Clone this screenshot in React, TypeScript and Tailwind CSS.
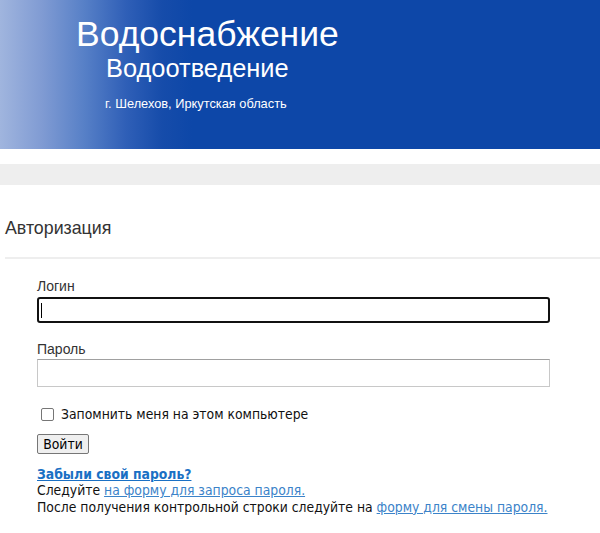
import React from "react";

export default function App() {
  return (
    <div className="w-[600px] min-h-[533px] bg-white font-['Liberation_Sans',Arial,sans-serif]">
      {/* Header banner */}
      <header className="h-[149px] bg-[linear-gradient(90deg,#a0b5de_0%,#809bd3_7%,#5780c7_14%,#2f5fb7_21%,#164caa_27%,#0d47a8_32%,#0d47a8_100%)] text-white">
        <div className="pl-[76px] pt-[14px]">
          <div className="text-[35.5px] leading-[40px]">Водоснабжение</div>
          <div className="pl-[30px] text-[25.4px] leading-[28px]">Водоотведение</div>
          <div className="pl-[29px] pt-[14px] text-[12.8px] leading-[16px]">г. Шелехов, Иркутская область</div>
        </div>
      </header>

      {/* Menu strip */}
      <div className="mt-[15px] h-[21px] bg-[#eeeeee]" />

      {/* Section heading */}
      <h1 className="pl-[5px] pt-[32px] text-[17.8px] leading-[22px] text-[#333]">Авторизация</h1>
      <div className="ml-[5px] mt-[18px] h-[2px] bg-[#eeeeee]" />

      {/* Login form */}
      <form className="pl-[37px] pt-[19px] w-[550px]">
        <label className="block text-[14px] leading-[16px] text-[#333] mb-[3px]">Логин</label>
        <div className="h-[26px] w-[513px] rounded-[3px] border-2 border-[#111] bg-white flex items-center pl-[2px]">
          <span className="w-px h-[15px] bg-black" />
        </div>

        <label className="block mt-[18px] text-[14px] leading-[16px] text-[#333] mb-[2px]">Пароль</label>
        <input
          type="password"
          className="block h-[28px] w-[513px] border border-[#c8c8c8] border-t-[#a0a0a0] bg-white outline-none"
        />

        <div className="mt-[19px] font-['DejaVu_Sans_Condensed','DejaVu_Sans',sans-serif] text-[13.8px] text-[#111]">
          <label className="flex items-center gap-[7px] pl-[4px]">
            <span className="w-[13px] h-[13px] rounded-[2px] border border-[#767676] bg-white" />
            <span className="leading-[16px]">Запомнить меня на этом компьютере</span>
          </label>

          <button
            type="button"
            className="mt-[12px] h-[20px] w-[52px] rounded-[2px] border border-[#767676] bg-[#efefef] text-[13.8px] leading-[16px] text-black"
          >
            Войти
          </button>

          <div className="mt-[11px] leading-[16.5px]">
            <a className="font-bold text-[#1a70c4] underline">Забыли свой пароль?</a>
            <div>
              Следуйте <a className="text-[#3b83c9] underline">на форму для запроса пароля.</a>
            </div>
            <div>
              После получения контрольной строки следуйте на{" "}
              <a className="text-[#3b83c9] underline">форму для смены пароля.</a>
            </div>
          </div>
        </div>
      </form>
    </div>
  );
}
